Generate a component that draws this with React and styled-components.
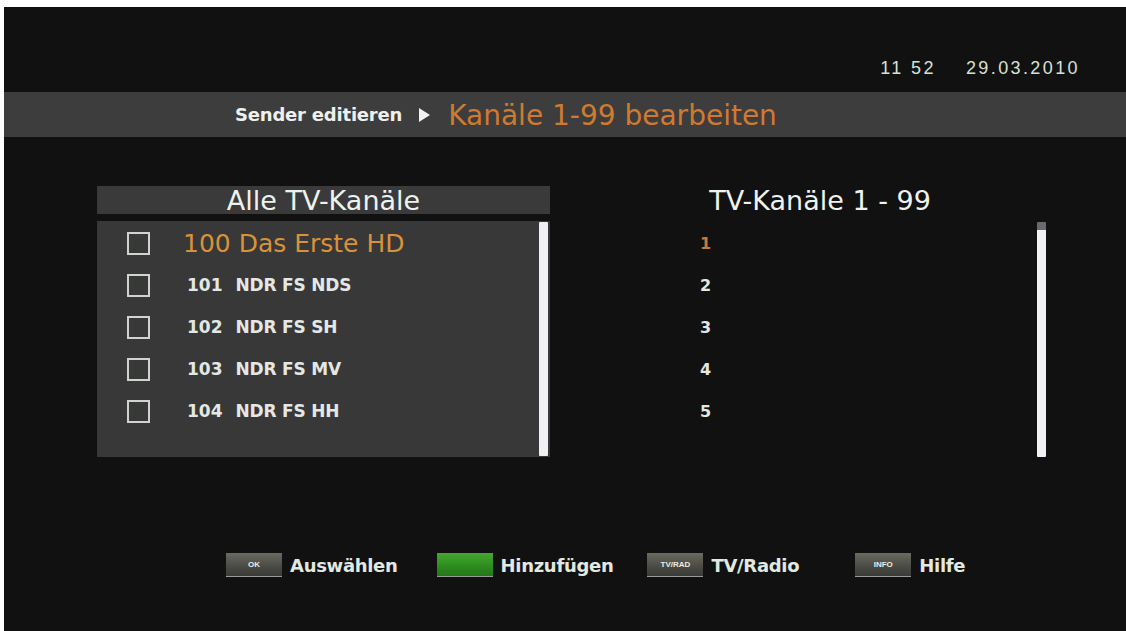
import React from "react";
import styled, { createGlobalStyle } from "styled-components";

const GlobalStyle = createGlobalStyle`
  html, body {
    margin: 0;
    padding: 0;
    background: #ffffff;
  }
`;

const channels = [
  { nr: "100", name: "Das Erste HD", active: true },
  { nr: "101", name: "NDR FS NDS" },
  { nr: "102", name: "NDR FS SH" },
  { nr: "103", name: "NDR FS MV" },
  { nr: "104", name: "NDR FS HH" },
];

const slots = ["1", "2", "3", "4", "5"];

const keys = [
  { key: "OK", label: "Auswählen", gap: 39 },
  { key: "", label: "Hinzufügen", green: true, gap: 34 },
  { key: "TV/RAD", label: "TV/Radio", gap: 56 },
  { key: "INFO", label: "Hilfe", gap: 0 },
];

const App = () => {
  return (
    <>
      <GlobalStyle />
      <Screen>
        <TopBar>
          <Clock>11 52</Clock>
          <Clock>29.03.2010</Clock>
        </TopBar>
        <Crumbs>
          <CrumbText>Sender editieren</CrumbText>
          <Arrow />
          <CrumbTitle>Kanäle 1-99 bearbeiten</CrumbTitle>
        </Crumbs>
        <Main>
          <LeftColumn>
            <PanelHeading>Alle TV-Kanäle</PanelHeading>
            <ListPanel>
              <Rows>
                {channels.map((c) => (
                  <Row key={c.nr}>
                    <Check />
                    {c.active ? (
                      <ActiveName>
                        {c.nr} {c.name}
                      </ActiveName>
                    ) : (
                      <Name>
                        <span>{c.nr}</span>
                        {c.name}
                      </Name>
                    )}
                  </Row>
                ))}
              </Rows>
              <Scrollbar />
            </ListPanel>
          </LeftColumn>
          <RightColumn>
            <RightHeading>TV-Kanäle 1 - 99</RightHeading>
            <SlotPanel>
              <Rows>
                {slots.map((s, i) => (
                  <SlotRow key={s}>
                    <Slot $active={i === 0}>{s}</Slot>
                  </SlotRow>
                ))}
              </Rows>
              <Scrollbar $right />
            </SlotPanel>
          </RightColumn>
        </Main>
        <Footer>
          {keys.map((k) => (
            <KeyHint key={k.label} style={{ marginRight: k.gap }}>
              <KeyCap $green={k.green}>{k.key}</KeyCap>
              <KeyLabel>{k.label}</KeyLabel>
            </KeyHint>
          ))}
        </Footer>
      </Screen>
    </>
  );
};

const Screen = styled.div`
  margin: 7px 0 0 4px;
  width: 1122px;
  height: 624px;
  background: #111111;
  display: flex;
  flex-direction: column;
  font-family: "DejaVu Sans", "Liberation Sans", sans-serif;
  color: #e2e8e2;
  overflow: hidden;
`;

const TopBar = styled.div`
  height: 85px;
  display: flex;
  justify-content: flex-end;
  align-items: flex-end;
  gap: 30px;
  padding: 0 46px 13px 0;
  box-sizing: border-box;
`;

const Clock = styled.span`
  font-family: "Liberation Sans", Arial, sans-serif;
  font-size: 18px;
  letter-spacing: 2.4px;
  color: #d8e0d8;
`;

const Crumbs = styled.div`
  height: 45px;
  background: #3d3d3d;
  display: flex;
  align-items: center;
  padding-left: 231px;
  box-sizing: border-box;
`;

const CrumbText = styled.span`
  font-size: 18px;
  font-weight: bold;
  letter-spacing: -0.2px;
  color: #eef0ee;
`;

const Arrow = styled.span`
  width: 0;
  height: 0;
  margin: 0 18px 0 17px;
  border-top: 7px solid transparent;
  border-bottom: 7px solid transparent;
  border-left: 11px solid #f2f2f2;
`;

const CrumbTitle = styled.span`
  font-size: 28px;
  color: #cf7a30;
  margin-top: 2px;
`;

const Main = styled.div`
  display: flex;
  padding: 49px 0 0 93px;
`;

const LeftColumn = styled.div`
  width: 453px;
  display: flex;
  flex-direction: column;
`;

const PanelHeading = styled.div`
  height: 28px;
  background: #3a3a3a;
  display: flex;
  align-items: center;
  justify-content: center;
  font-size: 27px;
  color: #eef2ee;
  margin-bottom: 7px;
`;

const ListPanel = styled.div`
  height: 236px;
  background: #383838;
  display: flex;
  padding: 1px 2px 0 0;
  box-sizing: border-box;
`;

const Rows = styled.div`
  flex: 1;
  display: flex;
  flex-direction: column;
`;

const Row = styled.div`
  height: 42px;
  display: flex;
  align-items: center;
  padding-left: 30px;
`;

const Check = styled.span`
  width: 19px;
  height: 19px;
  border: 2px solid #cfd4cf;
  margin-right: 33px;
  flex-shrink: 0;
`;

const ActiveName = styled.span`
  font-size: 25px;
  color: #d8923a;
`;

const Name = styled.span`
  font-size: 17px;
  font-weight: bold;
  letter-spacing: -0.2px;
  color: #e4e8e4;
  margin-left: 4px;

  span {
    margin-right: 13px;
    letter-spacing: 0;
  }
`;

const Scrollbar = styled.div`
  width: 9px;
  height: ${(p) => (p.$right ? "235px" : "234px")};
  background: ${(p) =>
    p.$right
      ? "linear-gradient(#6a6a6a 0, #6a6a6a 8px, #f2f2f6 8px)"
      : "#f0f0f4"};
  border-radius: 1px;
`;

const RightColumn = styled.div`
  width: 540px;
  display: flex;
  flex-direction: column;
`;

const RightHeading = styled.div`
  height: 28px;
  display: flex;
  align-items: center;
  justify-content: center;
  font-size: 27px;
  color: #eef2ee;
  margin-bottom: 7px;
`;

const SlotPanel = styled.div`
  height: 236px;
  display: flex;
  padding: 1px 44px 0 0;
  box-sizing: border-box;
`;

const SlotRow = styled.div`
  height: 42px;
  display: flex;
  align-items: center;
  padding-left: 150px;
`;

const Slot = styled.span`
  font-size: 16px;
  font-weight: bold;
  color: ${(p) => (p.$active ? "#c87a3a" : "#e4e8e4")};
`;

const Footer = styled.div`
  display: flex;
  align-items: center;
  padding: 96px 0 0 222px;
`;

const KeyHint = styled.div`
  display: flex;
  align-items: center;
`;

const KeyCap = styled.span`
  width: 56px;
  height: 24px;
  display: flex;
  align-items: center;
  justify-content: center;
  font-family: "Liberation Sans", Arial, sans-serif;
  font-size: 8px;
  font-weight: bold;
  color: #e8ece8;
  border-bottom: 1px solid #9a9a9a;
  box-sizing: border-box;
  background: ${(p) =>
    p.$green
      ? "linear-gradient(#45a830, #2c8a1e 60%, #237618)"
      : "linear-gradient(#6a6a62, #4a4a44 60%, #3a3a36)"};
  margin-right: 8px;
`;

const KeyLabel = styled.span`
  font-size: 18px;
  font-weight: bold;
  letter-spacing: -0.3px;
  color: #e2e8e2;
`;

export default App;
